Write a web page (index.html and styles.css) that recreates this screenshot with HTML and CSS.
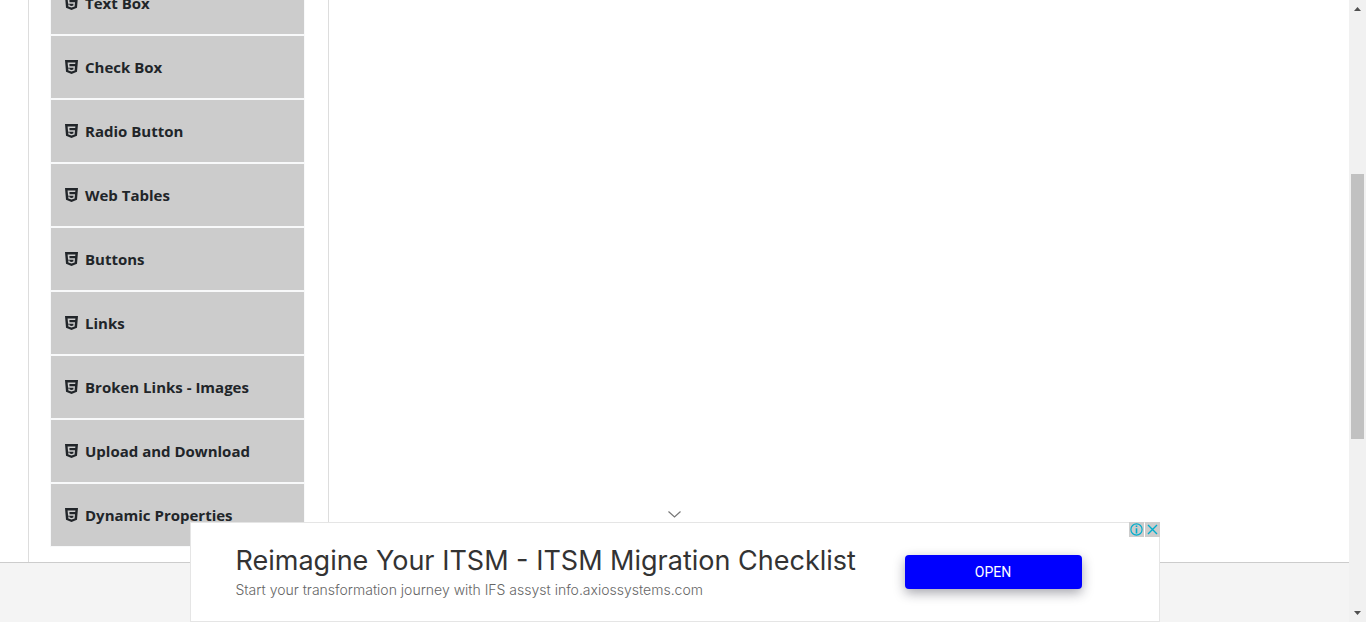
FILE: index.html
```
<!DOCTYPE html>
<html lang="en">
<head>
<meta charset="utf-8">
<title>Elements</title>
<link rel="stylesheet" href="styles.css">
</head>
<body>
<svg class="defs" aria-hidden="true">
  <symbol id="html5" viewBox="0 0 13 14">
    <path fill="currentColor" fill-rule="evenodd" d="M0 0H13L12 11.7L6.5 14L1 11.7ZM2.6 2.6L3.1 7.7H8.5L8.3 9.4L6.5 10L4.7 9.4L4.6 8.6H3.2L3.4 10.5L6.5 11.6L9.6 10.5L10 6.3H4.5L4.4 4.1H10.2L10.4 2.6Z"/>
  </symbol>
</svg>
<div class="page">
  <div class="view">
    <main class="content">
      <nav class="sidebar">
        <ul class="menu">
          <li><a class="item" href="#"><svg class="icon"><use href="#html5"/></svg>Text Box</a></li>
          <li><a class="item" href="#"><svg class="icon"><use href="#html5"/></svg>Check Box</a></li>
          <li><a class="item" href="#"><svg class="icon"><use href="#html5"/></svg>Radio Button</a></li>
          <li><a class="item" href="#"><svg class="icon"><use href="#html5"/></svg>Web Tables</a></li>
          <li><a class="item" href="#"><svg class="icon"><use href="#html5"/></svg>Buttons</a></li>
          <li><a class="item" href="#"><svg class="icon"><use href="#html5"/></svg>Links</a></li>
          <li><a class="item" href="#"><svg class="icon"><use href="#html5"/></svg>Broken Links - Images</a></li>
          <li><a class="item" href="#"><svg class="icon"><use href="#html5"/></svg>Upload and Download</a></li>
          <li><a class="item" href="#"><svg class="icon"><use href="#html5"/></svg>Dynamic Properties</a></li>
        </ul>
      </nav>
    </main>
    <footer class="footer"></footer>
    <aside class="anchor">
      <button class="collapse" aria-label="Collapse"><svg width="13" height="7" viewBox="0 0 13 7"><path d="M.5 .5L6.5 6L12.5 .5" fill="none" stroke="#777" stroke-width="1.2"/></svg></button>
      <div class="ad">
        <div class="copy">
          <a class="headline" href="#">Reimagine Your ITSM - ITSM Migration Checklist</a>
          <a class="detail" href="#">Start your transformation journey with IFS assyst info.axiossystems.com</a>
        </div>
        <button class="open">OPEN</button>
        <div class="choices">
          <button class="choice" aria-label="Ad information"><svg width="15" height="15" viewBox="0 0 15 15" fill="none" stroke="#00aecd"><circle cx="7.5" cy="7.5" r="5.6" stroke-width="1.2"/><path d="M7.5 3.4V5M7.5 6.2V11.4" stroke-width="1.6"/></svg></button>
          <button class="choice" aria-label="Close ad"><svg width="15" height="15" viewBox="0 0 15 15"><path d="M3 3L12 12M12 3L3 12" stroke="#00aecd" stroke-width="1.4"/></svg></button>
        </div>
      </div>
    </aside>
  </div>
  <div class="scrollbar" aria-hidden="true">
    <svg class="arrow" viewBox="0 0 17 17"><path d="M5 11H12L8.5 7Z" fill="#505050"/></svg>
    <div class="track"><div class="thumb"></div></div>
    <svg class="arrow" viewBox="0 0 17 17"><path d="M5 6H12L8.5 10Z" fill="#505050"/></svg>
  </div>
</div>
</body>
</html>
```
FILE: styles.css
```
* { box-sizing: border-box; }
body { margin: 0; background: #fff; color: #212529; font-family: "Open Sans", "Noto Sans", sans-serif; }
button { border: 0; padding: 0; cursor: pointer; }
a { color: inherit; text-decoration: none; }
svg { display: block; }
.defs { position: absolute; width: 0; height: 0; }
.page { display: flex; height: 100vh; overflow: hidden; }
.view { flex: 1; min-width: 0; display: flex; flex-direction: column; position: relative; }
.content { display: flex; padding-left: 28px; }
.sidebar { width: 301px; padding: 0 23px 15px 21px; border: solid #ddd; border-width: 0 1px; }
/* The list is scrolled: its first entry is partly above the viewport. */
.menu { list-style: none; margin: -29px 0 0; padding: 0; }
.item { display: flex; align-items: center; gap: 7px; height: 64px; padding: 0 14px; background: #ccc; border: 1px solid #f8f9fa; font-size: 15px; font-weight: 700; line-height: 24px; }
.icon { width: 13px; height: 14px; flex: none; }
.footer { flex: 1; background: #f4f4f4; border-top: 1px solid #ccc; }
.anchor { position: absolute; bottom: 0; left: 0; right: 0; display: flex; flex-direction: column; align-items: center; }
.collapse { display: flex; justify-content: center; width: 40px; padding: 4px 0; background: transparent; }
.ad { position: relative; display: flex; align-items: center; width: 970px; max-width: 100%; height: 100px; padding: 0 77px 0 45px; background: #fff; border: 1px solid #e5e5e5; }
.copy { flex: 1; display: flex; flex-direction: column; white-space: nowrap; }
.headline { color: #333; font: 400 27px/36px Inter, sans-serif; }
.detail { color: #666; font: 300 14px/22px Inter, sans-serif; }
.open { width: 177px; height: 34px; border-radius: 4px; background: #00f; color: #fff; font: 400 14px/20px Roboto, sans-serif; box-shadow: 0 4px 12px rgba(32, 33, 50, .4); }
.choices { position: absolute; top: -1px; right: -1px; display: flex; gap: 1px; }
.choice { width: 15px; height: 15px; background: #ccc; }
.scrollbar { display: flex; flex-direction: column; width: 17px; background: #f1f1f1; }
.arrow { width: 17px; height: 17px; flex: none; }
.track { flex: 1; display: flex; flex-direction: column; padding: 157px 2px 166px; }
.thumb { flex: 1; background: #c1c1c1; }
```
